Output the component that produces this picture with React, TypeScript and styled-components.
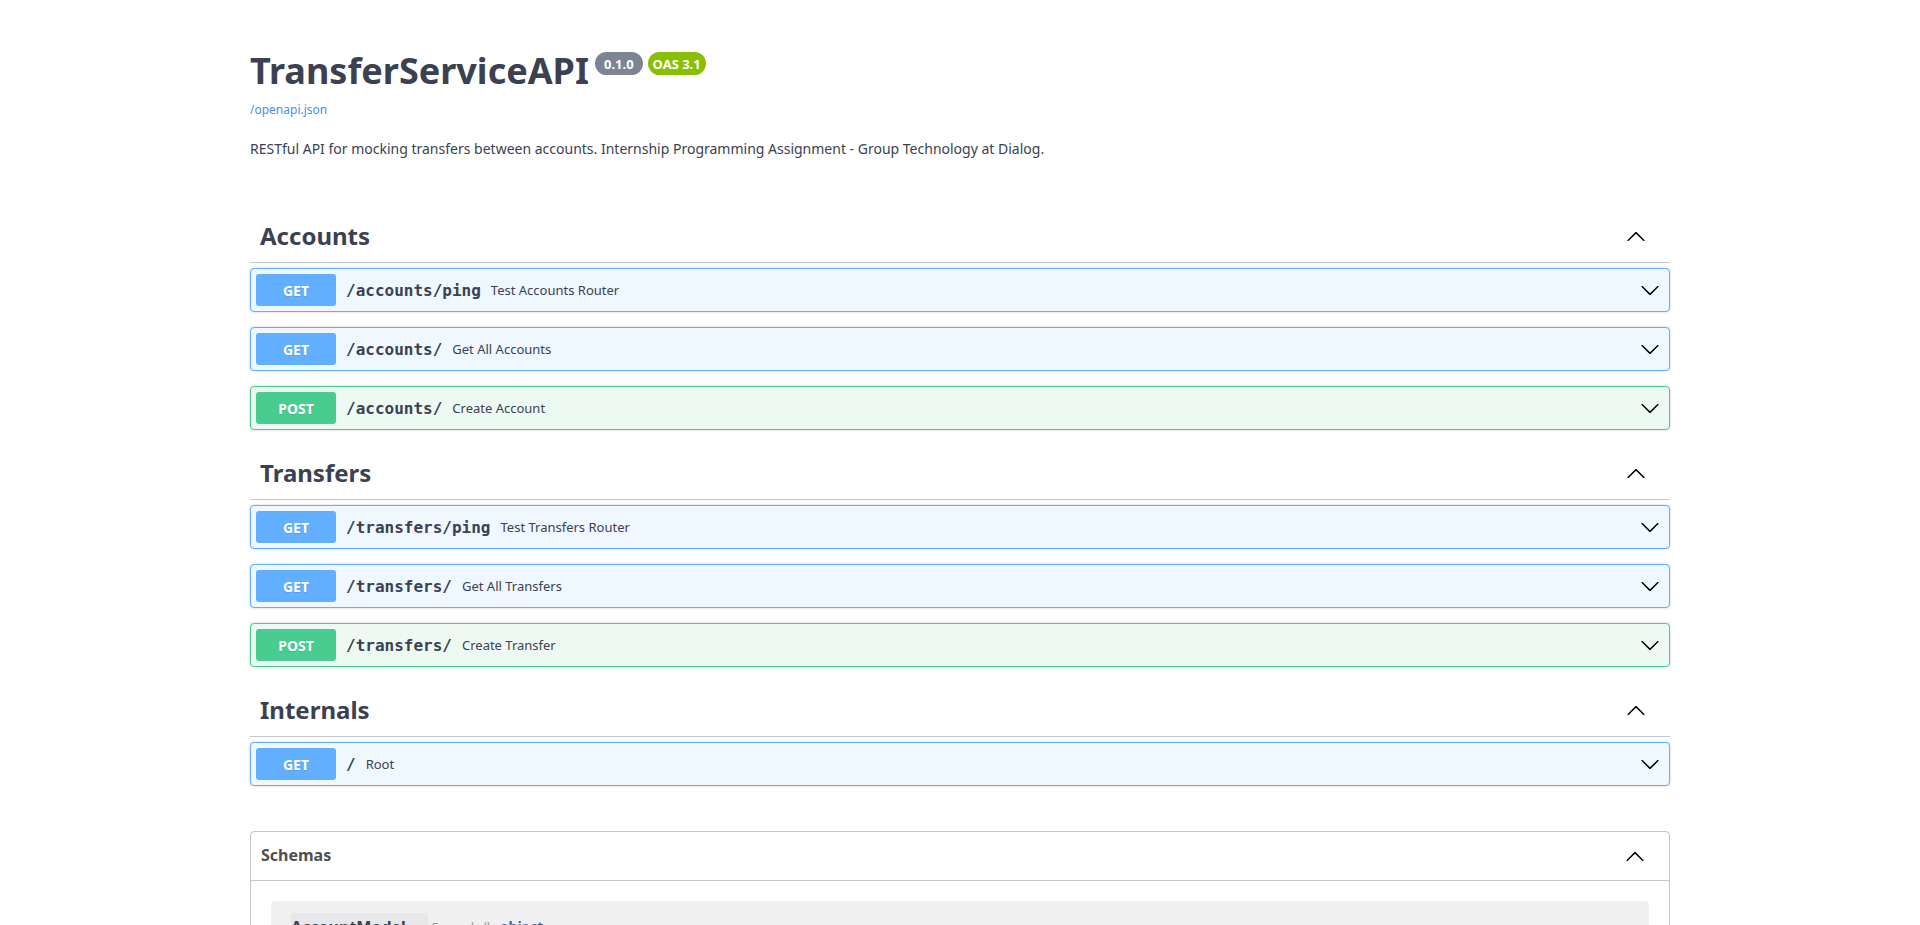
import styled, { createGlobalStyle } from "styled-components";

const GlobalStyle = createGlobalStyle`
  * {
    box-sizing: border-box;
  }

  body {
    margin: 0;
    background: #fff;
    font-family: "Noto Sans", "Open Sans", sans-serif;
    color: #3b4151;
  }
`;

const Wrapper = styled.div`
  max-width: 1460px;
  margin: 0 auto;
  padding: 0 20px;
`;

const Info = styled.div`
  padding: 46px 0 50px;
`;

const TitleRow = styled.div`
  display: flex;
  align-items: flex-start;
`;

const Title = styled.h2`
  margin: 0;
  font-size: 36px;
  line-height: 49px;
  font-weight: 700;
  color: #3b4151;
`;

const Badge = styled.span<{ $bg: string; $pad: number }>`
  display: inline-flex;
  align-items: center;
  height: 23px;
  margin: 6px 0 0 5px;
  padding: 0 ${(p) => p.$pad}px;
  border-radius: 12px;
  background: ${(p) => p.$bg};
  color: #fff;
  font-size: 13px;
  font-weight: 700;

  &:first-of-type {
    margin-left: 6px;
  }
`;

const BaseUrl = styled.a`
  display: block;
  margin-top: 7px;
  font-size: 12px;
  line-height: 16px;
  color: #4990e2;
  text-decoration: none;
`;

const Description = styled.p`
  margin: 21px 0 0;
  font-size: 14px;
  line-height: 19px;
  color: #3b4151;
`;

const TagSection = styled.section`
  display: flex;
  flex-direction: column;
`;

const TagHeading = styled.h3`
  display: flex;
  align-items: center;
  height: 55px;
  margin: 0 0 5px;
  padding: 11px 20px 9px 10px;
  border-bottom: 1px solid rgba(59, 65, 81, 0.3);
  font-size: 24px;
  line-height: 34px;
  font-weight: 700;
  color: #3b4151;
`;

const Grow = styled.span`
  flex: 1;
`;

const Arrow = styled.svg`
  flex: none;
  width: 20px;
  height: 20px;
  margin-right: 4px;
  fill: #000;
`;

const METHOD_COLORS: Record<string, { main: string; tint: string }> = {
  GET: { main: "#61affe", tint: "#eff7ff" },
  POST: { main: "#49cc90", tint: "#edfaf4" },
};

const OpBlock = styled.div<{ $method: string }>`
  display: flex;
  align-items: center;
  height: 44px;
  margin-bottom: 15px;
  padding: 5px;
  border: 1px solid ${(p) => METHOD_COLORS[p.$method].main};
  border-radius: 4px;
  background: ${(p) => METHOD_COLORS[p.$method].tint};
  box-shadow: 0 0 3px rgba(0, 0, 0, 0.19);
`;

const Method = styled.span<{ $method: string }>`
  display: flex;
  align-items: center;
  justify-content: center;
  flex: none;
  width: 80px;
  height: 32px;
  border-radius: 3px;
  background: ${(p) => METHOD_COLORS[p.$method].main};
  color: #fff;
  font-size: 14px;
  font-weight: 700;
  text-shadow: 0 1px 0 rgba(0, 0, 0, 0.1);
`;

const Path = styled.span`
  padding: 0 10px;
  font-family: "DejaVu Sans Mono", monospace;
  font-size: 16px;
  font-weight: 700;
  color: #3b4151;
`;

const Summary = styled.span`
  flex: 1;
  font-size: 13px;
  color: #3b4151;
`;

const Models = styled.section`
  margin: 30px 0;
  border: 1px solid rgba(59, 65, 81, 0.3);
  border-radius: 4px;
`;

const ModelsHeading = styled.h4`
  display: flex;
  align-items: center;
  height: 49px;
  margin: 0;
  padding: 10px 20px 10px 10px;
  border-bottom: 1px solid rgba(59, 65, 81, 0.3);
  font-size: 16px;
  font-weight: 700;
  color: #505050;
`;

const ModelsTitle = styled.span`
  flex: 1;
  padding-bottom: 3px;
`;

const ModelsBody = styled.div`
  padding-top: 20px;
`;

const ModelContainer = styled.div`
  display: flex;
  align-items: flex-start;
  margin: 0 20px 15px;
  padding: 12px 20px;
  border-radius: 4px;
  background: rgba(0, 0, 0, 0.06);
`;

const ModelTab = styled.span`
  padding: 3px 22px 3px 0;
  background: rgba(60, 60, 120, 0.04);
  font-size: 16px;
  line-height: 22px;
  font-weight: 700;
  color: #3b4151;
`;

const ExpandAll = styled.span`
  margin: 6px 0 0 4px;
  font-size: 12px;
  line-height: 18px;
  color: #9a9a9a;
`;

const ModelType = styled.span`
  margin: 4px 0 0 10px;
  font-size: 14px;
  line-height: 20px;
  font-weight: 700;
  color: #55a;
`;

const UpArrow = () => (
  <Arrow viewBox="0 0 20 20" aria-hidden="true">
    <path d="M17.418 14.908c.272.268.709.268.979 0s.271-.701 0-.969l-7.908-7.83c-.27-.268-.707-.268-.979 0l-7.908 7.83c-.27.268-.27.701 0 .969.271.268.709.268.979 0L10 7.771l7.418 7.137z" />
  </Arrow>
);

const DownArrow = () => (
  <Arrow viewBox="0 0 20 20" aria-hidden="true">
    <path d="M17.418 6.109c.272-.268.709-.268.979 0s.271.701 0 .969l-7.908 7.83c-.27.268-.707.268-.979 0l-7.908-7.83c-.27-.268-.27-.701 0-.969.271-.268.709-.268.979 0L10 13.25l7.418-7.141z" />
  </Arrow>
);

type Operation = { method: string; path: string; summary: string };

const TAGS: { name: string; ops: Operation[] }[] = [
  {
    name: "Accounts",
    ops: [
      { method: "GET", path: "/accounts/ping", summary: "Test Accounts Router" },
      { method: "GET", path: "/accounts/", summary: "Get All Accounts" },
      { method: "POST", path: "/accounts/", summary: "Create Account" },
    ],
  },
  {
    name: "Transfers",
    ops: [
      { method: "GET", path: "/transfers/ping", summary: "Test Transfers Router" },
      { method: "GET", path: "/transfers/", summary: "Get All Transfers" },
      { method: "POST", path: "/transfers/", summary: "Create Transfer" },
    ],
  },
  {
    name: "Internals",
    ops: [{ method: "GET", path: "/", summary: "Root" }],
  },
];

const App = () => {
  return (
    <>
      <GlobalStyle />
      <Wrapper>
        <Info>
          <TitleRow>
            <Title>TransferServiceAPI</Title>
            <Badge $bg="#7d8492" $pad={9}>
              0.1.0
            </Badge>
            <Badge $bg="#89bf04" $pad={5}>
              OAS 3.1
            </Badge>
          </TitleRow>
          <BaseUrl href="#">/openapi.json</BaseUrl>
          <Description>
            RESTful API for mocking transfers between accounts. Internship
            Programming Assignment - Group Technology at Dialog.
          </Description>
        </Info>

        {TAGS.map((tag) => (
          <TagSection key={tag.name}>
            <TagHeading>
              <Grow>{tag.name}</Grow>
              <UpArrow />
            </TagHeading>
            {tag.ops.map((op) => (
              <OpBlock key={op.method + op.path} $method={op.method}>
                <Method $method={op.method}>{op.method}</Method>
                <Path>{op.path}</Path>
                <Summary>{op.summary}</Summary>
                <DownArrow />
              </OpBlock>
            ))}
          </TagSection>
        ))}

        <Models>
          <ModelsHeading>
            <ModelsTitle>Schemas</ModelsTitle>
            <UpArrow />
          </ModelsHeading>
          <ModelsBody>
            <ModelContainer>
              <ModelTab>AccountModel</ModelTab>
              <ExpandAll>Expand all</ExpandAll>
              <ModelType>object</ModelType>
            </ModelContainer>
          </ModelsBody>
        </Models>
      </Wrapper>
    </>
  );
};

export default App;
